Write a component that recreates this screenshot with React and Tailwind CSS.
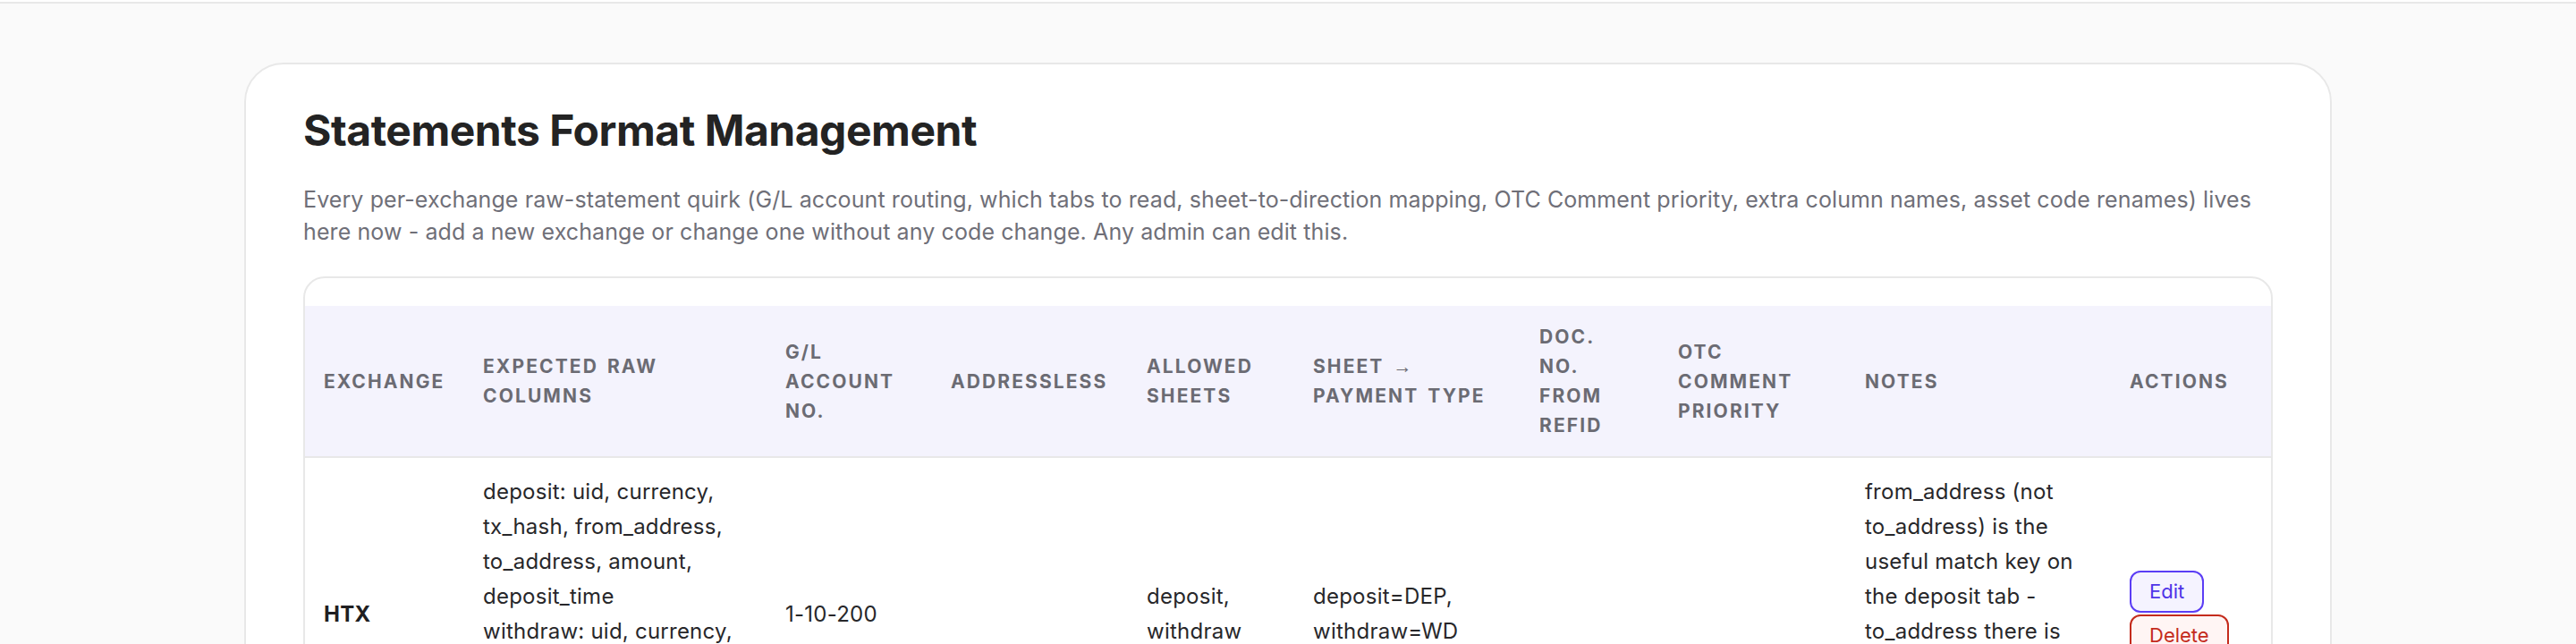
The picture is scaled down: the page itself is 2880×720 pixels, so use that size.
import React from 'react'

const arrow = <span className="font-['Liberation_Sans',sans-serif] font-normal">{'\u2192'}</span>

const columns = [
  { key: 'exchange', label: 'Exchange', w: 'w-[178px]' },
  { key: 'columns', label: 'Expected raw columns', w: 'w-[338px]' },
  { key: 'gl', label: 'G/L account no.', w: 'w-[185px]' },
  { key: 'addressless', label: 'Addressless', w: 'w-[219px]' },
  { key: 'sheets', label: 'Allowed sheets', w: 'w-[186px]' },
  { key: 'mapping', label: <>Sheet {arrow} payment type</>, w: 'w-[253px]' },
  { key: 'docno', label: 'Doc. no. from refid', w: 'w-[155px]' },
  { key: 'otc', label: 'OTC comment priority', w: 'w-[209px]' },
  { key: 'notes', label: 'Notes', w: 'w-[296px]' },
  { key: 'actions', label: 'Actions', w: '' },
]

const formats = [
  {
    id: 1,
    exchange: 'HTX',
    columns: [
      'deposit: uid, currency, tx_hash, from_address, to_address, amount, deposit_time',
      'withdraw: uid, currency, tx_hash, from_address, to_address, amount, withdraw_time',
    ],
    gl: '1-10-200',
    addressless: '',
    sheets: 'deposit, withdraw',
    mapping: 'deposit=DEP, withdraw=WD',
    docno: '',
    otc: '',
    notes:
      "from_address (not to_address) is the useful match key on the deposit tab - to_address there is the exchange's own hot wallet and never changes.",
  },
]

function FormatRow({ row }) {
  return (
    <tr className="align-middle">
      <td className="px-[21px] py-[18px] font-bold text-[#1f1f22]">{row.exchange}</td>
      <td className="px-[21px] py-[18px]">
        {row.columns.map((c) => (
          <div key={c}>{c}</div>
        ))}
      </td>
      <td className="px-[21px] py-[18px]">{row.gl}</td>
      <td className="px-[21px] py-[18px]">{row.addressless}</td>
      <td className="px-[21px] py-[18px]">{row.sheets}</td>
      <td className="px-[21px] py-[18px]">{row.mapping}</td>
      <td className="px-[21px] py-[18px]">{row.docno}</td>
      <td className="px-[21px] py-[18px]">{row.otc}</td>
      <td className="px-[21px] py-[18px]">{row.notes}</td>
      <td className="px-[21px] py-[18px]">
        <div className="flex flex-col items-start gap-[2px]">
          <button className="rounded-[12px] border-2 border-[#5b3df5] bg-[#f5f3ff] px-[20px] py-[5px] text-[22px] leading-[33px] tracking-normal text-[#4f35e8]">
            Edit
          </button>
          <button className="rounded-[12px] border-2 border-[#c42b1c] bg-[#fff5f4] px-[20px] py-[5px] text-[22px] leading-[33px] tracking-normal text-[#c42b1c]">
            Delete
          </button>
        </div>
      </td>
    </tr>
  )
}

export default function App() {
  return (
    <div className="min-h-screen bg-[#fafafa] font-['Inter','Liberation_Sans',sans-serif]">
      <div className="h-[4px] border-b-2 border-[#e8e8e8] bg-white"></div>

      <div className="mx-auto mt-[66px] max-w-[2334px] rounded-[44px] border-2 border-[#e8e8e8] bg-white px-16 pt-[44px] pb-16">
        <h1 className="text-[48px] leading-[60px] font-bold tracking-[-0.01em] text-[#232323]">
          Statements Format Management
        </h1>
        <p className="mt-[29px] text-[25px] leading-[36px] tracking-[0.004em] text-[#6f6f78]">
          Every per-exchange raw-statement quirk (G/L account routing, which tabs to read, sheet-to-direction mapping, OTC
          Comment priority, extra column names, asset code renames) lives here now - add a new exchange or change one
          without any code change. Any admin can edit this.
        </p>

        <div className="mt-8 overflow-hidden rounded-3xl border-2 border-[#e8e8e8] pt-[31px]">
          <table className="w-full table-fixed text-left text-[24px] leading-[39px] tracking-[0.01em] text-[#27272a]">
            <thead>
              <tr className="border-b-2 border-[#e8e8e8] bg-[#f4f3fd]">
                {columns.map((col) => (
                  <th
                    key={col.key}
                    className={`${col.w} px-[21px] py-[18px] align-middle text-[21px] leading-[33px] font-bold tracking-[0.1em] [word-spacing:3px] text-[#6b6b73] uppercase`}
                  >
                    {col.label}
                  </th>
                ))}
              </tr>
            </thead>
            <tbody>
              {formats.map((row) => (
                <FormatRow key={row.id} row={row} />
              ))}
            </tbody>
          </table>
        </div>
      </div>
    </div>
  )
}
